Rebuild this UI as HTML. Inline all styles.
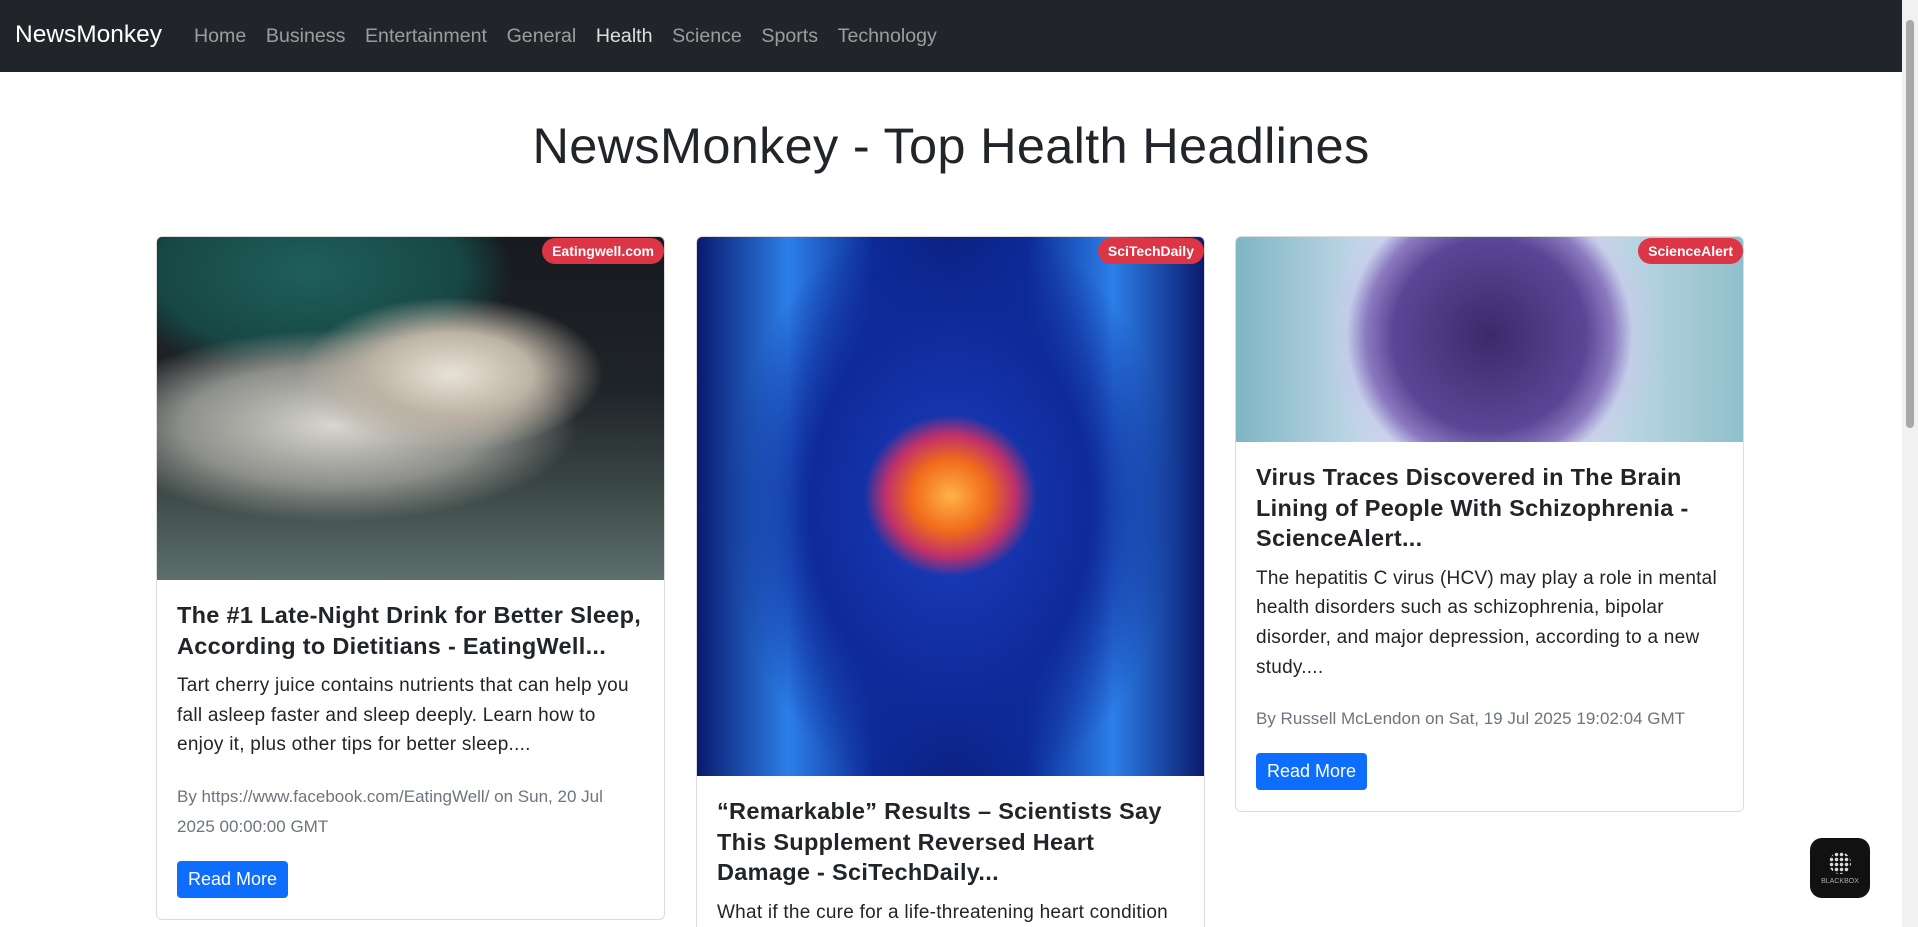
<!DOCTYPE html>
<html><head><meta charset="utf-8"><style>
*{box-sizing:border-box;margin:0;padding:0}
html,body{width:1918px;height:927px;overflow:hidden}
body{background:#fff;font-family:"Liberation Sans",sans-serif;color:#212529;position:relative}
.nav{position:absolute;left:0;top:0;width:1902px;height:72px;background:#212529}
.brand{position:absolute;left:15px;top:21px;font-size:24.5px;color:#fff}
.links{position:absolute;left:194px;top:25px;font-size:19.6px;color:rgba(255,255,255,.55);white-space:nowrap}
.links span{margin-right:19.6px}
.links .a{color:rgba(255,255,255,.85)}
h1{position:absolute;left:0;width:1902px;top:116px;text-align:center;font-size:50.5px;font-weight:500;letter-spacing:0.3px}
.card{position:absolute;top:236px;width:509px;border:1px solid #dcdcdc;border-radius:6px;overflow:hidden;background:#fff}
.img{position:relative;width:100%}
.badge{position:absolute;right:0;top:1px;background:#dc3545;color:#fff;font-weight:bold;font-size:14px;padding:5px 10px;border-radius:13px}
.body{padding:20px 20px 21px}
.t{font-size:23.5px;font-weight:bold;line-height:30.6px;margin-bottom:10px;letter-spacing:0.3px}
.p{font-size:19px;line-height:29.6px;margin-bottom:22px;letter-spacing:0.25px}
.m{font-size:17px;line-height:30.5px;color:#6c757d;margin-bottom:18px}
.btn{display:inline-block;background:#0d6efd;color:#fff;font-size:18px;padding:8px 11px;border-radius:4px;line-height:21px}
.sb{position:absolute;right:0;top:0;width:16px;height:927px;background:#f1f1f1}
.sb div{position:absolute;left:4px;top:20px;width:8px;height:408px;border-radius:4px;background:#a8a8a8}
.bb{position:absolute;left:1810px;top:838px;width:60px;height:60px;border-radius:12px;background:#111;color:#aaa;font-size:7px;text-align:center}
</style></head><body>
<div class="nav"><div class="brand">NewsMonkey</div>
<div class="links"><span>Home</span><span>Business</span><span>Entertainment</span><span>General</span><span class="a">Health</span><span>Science</span><span>Sports</span><span>Technology</span></div></div>
<h1>NewsMonkey - Top Health Headlines</h1>

<div class="card" style="left:156px">
<div class="img" style="height:343px;background:radial-gradient(ellipse 40% 30% at 58% 40%,#e8e2d6 0%,#bdb3a5 40%,transparent 75%),radial-gradient(ellipse 60% 35% at 35% 55%,#d8d6cf 0%,#8d8f8a 50%,transparent 80%),radial-gradient(ellipse 50% 40% at 30% 10%,#1f5f5a 0%,#174745 60%,transparent 80%),linear-gradient(180deg,#171a1f 0%,#1f2428 45%,#3d4a48 75%,#5d6f6d 100%)">
<div class="badge">Eatingwell.com</div></div>
<div class="body"><div class="t">The #1 Late-Night Drink for Better Sleep, According to Dietitians - EatingWell...</div>
<div class="p">Tart cherry juice contains nutrients that can help you fall asleep faster and sleep deeply. Learn how to enjoy it, plus other tips for better sleep....</div>
<div class="m">By https://www.facebook.com/EatingWell/ on Sun, 20 Jul 2025 00:00:00 GMT</div>
<div class="btn">Read More</div></div></div>

<div class="card" style="left:696px">
<div class="img" style="height:539px;background:radial-gradient(ellipse 17% 15% at 50% 48%,#ffb347 0%,#f06a1c 45%,#c0306a 75%,transparent 100%),radial-gradient(ellipse 55% 70% at 50% 50%,#1c3fbf 0%,#0f2a9a 50%,transparent 80%),linear-gradient(90deg,#0a1a6e 0%,#2c7fe8 18%,#0c2a96 35%,#0a1e7a 50%,#0c2a96 65%,#2c7fe8 82%,#0a1a6e 100%)">
<div class="badge">SciTechDaily</div></div>
<div class="body"><div class="t">“Remarkable” Results – Scientists Say This Supplement Reversed Heart Damage - SciTechDaily...</div>
<div class="p">What if the cure for a life-threatening heart condition was already sitting in your medicine cabinet? New research suggests it might be....</div>
<div class="m">By SciTechDaily</div>
<div class="btn">Read More</div></div></div>

<div class="card" style="left:1235px">
<div class="img" style="height:205px;background:radial-gradient(circle at 50% 48%,#3a2a6a 0%,#5b4696 35%,#8b7ac0 45%,rgba(200,200,235,.6) 52%,transparent 62%),linear-gradient(90deg,#7fb5c3 0%,#cfdff0 30%,#dbe6f5 60%,#8fbfca 100%)">
<div class="badge">ScienceAlert</div></div>
<div class="body"><div class="t">Virus Traces Discovered in The Brain Lining of People With Schizophrenia - ScienceAlert...</div>
<div class="p">The hepatitis C virus (HCV) may play a role in mental health disorders such as schizophrenia, bipolar disorder, and major depression, according to a new study....</div>
<div class="m">By Russell McLendon on Sat, 19 Jul 2025 19:02:04 GMT</div>
<div class="btn">Read More</div></div></div>

<div class="bb"><div style="margin:14px auto 4px;width:22px;height:22px;border-radius:50%;background:radial-gradient(circle,#ddd 1.5px,transparent 2px) 0 0/5px 5px"></div>BLACKBOX</div>
<div class="sb"><div></div></div>
</body></html>
